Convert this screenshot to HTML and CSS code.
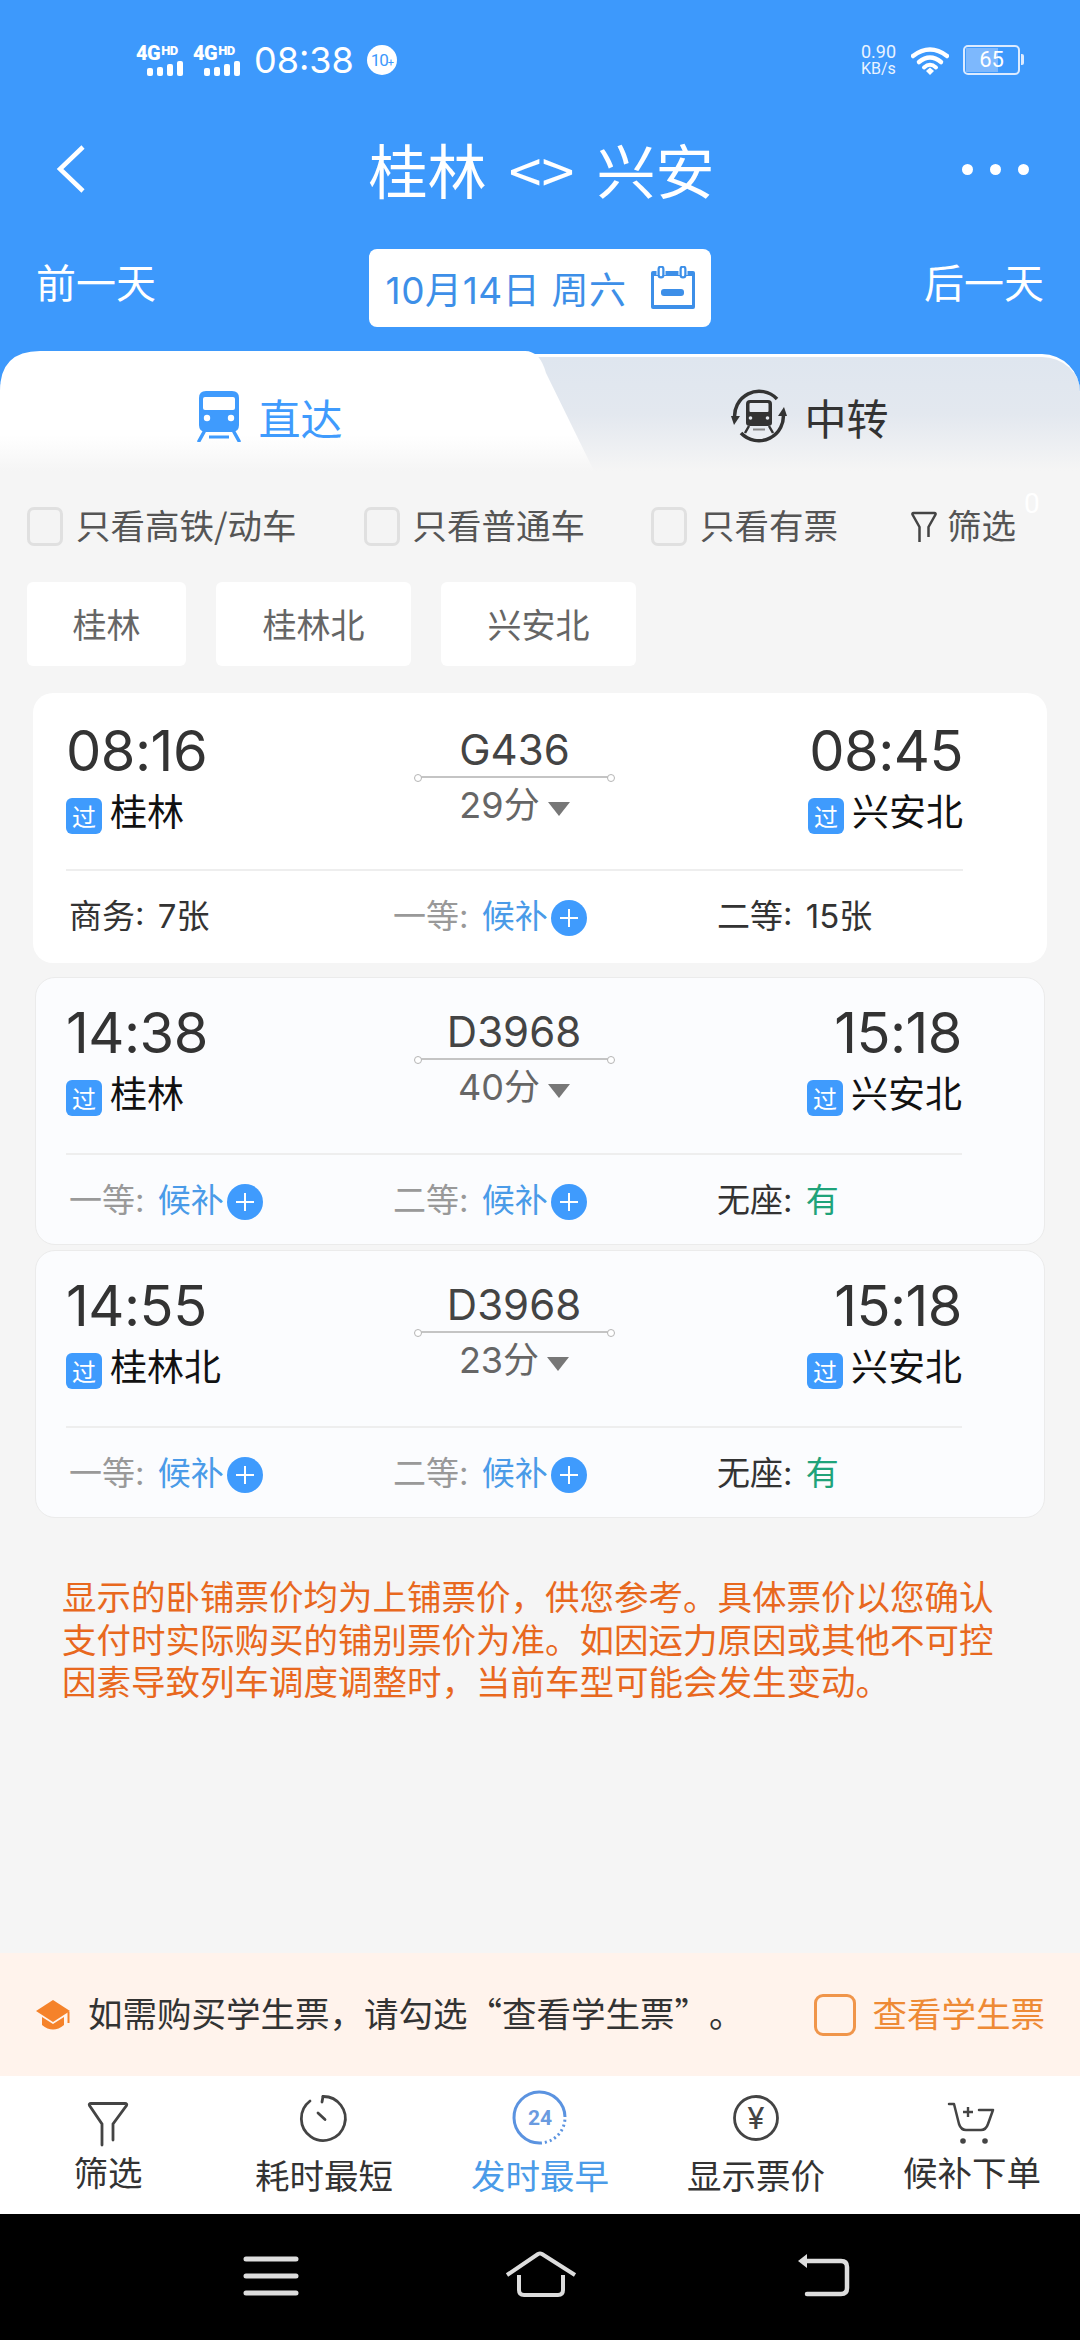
FILE: index.html
```html
<!DOCTYPE html>
<html lang="zh-CN">
  <head>
    <meta charset="UTF-8" />
    <meta name="viewport" content="width=device-width, initial-scale=1.0" />
    <title>桂林 - 兴安</title>
    <link rel="stylesheet" href="styles.css">
  </head>
  <body>
    <header class="header">
      <div class="status-bar">
        <div class="signal"><span class="signal-text">4G<small>HD</small></span><span class="bars"><i></i><i></i><i></i><i></i></span></div>
        <div class="signal"><span class="signal-text">4G<small>HD</small></span><span class="bars"><i></i><i></i><i></i><i></i></span></div>
        <span class="clock">08:38</span>
        <span class="notif">10<small>+</small></span>
        <div class="status-right">
          <div class="speed"><span>0.90</span><span class="speed-unit">KB/s</span></div>
          <svg class="wifi" width="38" height="28" viewBox="0 0 38 28">
            <path d="M2 9 Q19 -4 36 9" fill="none" stroke="#fff" stroke-width="4.5" stroke-linecap="round" />
            <path d="M8 15 Q19 6 30 15" fill="none" stroke="#fff" stroke-width="4.5" stroke-linecap="round" />
            <path d="M13 20.5 Q19 15 25 20.5" fill="none" stroke="#fff" stroke-width="4" stroke-linecap="round" />
            <path d="M15 24 L19 20.5 L23 24 L19 28 Z" fill="#fff" />
          </svg>
          <div class="battery"><span class="battery-fill"></span><span class="battery-num">65</span></div>
        </div>
      </div>

      <div class="title-row">
        <svg class="back-icon" width="34" height="48" viewBox="0 0 34 48">
          <path d="M29 2 L6 24 L29 46" fill="none" stroke="#fff" stroke-width="4.5" />
        </svg>
        <h1 class="title">桂林 &lt;&gt; 兴安</h1>
        <div class="more"><i></i><i></i><i></i></div>
      </div>

      <div class="date-row">
        <span class="day-link">前一天</span>
        <div class="date-pill">
          <span class="date-text">10月14日 周六</span>
          <svg width="46" height="44" viewBox="0 0 46 44">
            <rect x="1" y="5" width="44" height="38" rx="2" fill="#3d8fe8" />
            <rect x="4" y="10" width="38" height="29" fill="#fff" />
            <path d="M11 4 V9 M33 4 V9" stroke="#fff" stroke-width="9" />
            <path d="M11 3 V9 M33 3 V9" stroke="#3d8fe8" stroke-width="7" stroke-linecap="round" />
            <path d="M11 3 V9 M33 3 V9" stroke="#fff" stroke-width="2.500" stroke-linecap="round" />
            <rect x="11" y="23" width="23" height="7" rx="3" fill="#3d8fe8" />
          </svg>
        </div>
        <span class="day-link day-next">后一天</span>
      </div>
    </header>

    <div class="tabs">
      <div class="tab-back"></div>
      <div class="tab-front"></div>
      <div class="tab tab-active">
        <svg width="44" height="52" viewBox="0 0 44 52">
          <path d="M9 1 H35 Q42 1 42 8 V35 Q42 42 35 42 H9 Q2 42 2 35 V8 Q2 1 9 1 Z" fill="#3f9bfd" />
          <rect x="6" y="7" width="32" height="13" rx="2" fill="#fff" />
          <circle cx="10" cy="28" r="3.2" fill="#fff" />
          <circle cx="34" cy="28" r="3.2" fill="#fff" />
          <path d="M7 42 L2 51 M37 42 L42 51" stroke="#3f9bfd" stroke-width="3.5" stroke-linecap="round" />
          <path d="M12 47 H32" stroke="#3f9bfd" stroke-width="3" />
        </svg>
        <span>直达</span>
      </div>
      <div class="tab">
        <svg width="56" height="56" viewBox="0 0 56 56">
          <path d="M4 32 A24.5 24.5 0 0 1 46 11" fill="none" stroke="#333" stroke-width="3.5" />
          <path d="M52 24 A24.5 24.5 0 0 1 10 45" fill="none" stroke="#333" stroke-width="3.5" />
          <path d="M0 28 L9 28 L3 37 Z" fill="#333" />
          <path d="M56 28 L47 28 L53 19 Z" fill="#333" />
          <path d="M19 12 H37 Q41 12 41 16 V35 Q41 38 37 38 H19 Q15 38 15 35 V16 Q15 12 19 12 Z" fill="#333" />
          <rect x="18.500" y="15" width="19" height="9" rx="1" fill="#e6eaf0" />
          <circle cx="19.500" cy="30" r="1.800" fill="#e6eaf0" />
          <circle cx="36.500" cy="30" r="1.800" fill="#e6eaf0" />
          <path d="M18 38 L14 45 M38 38 L42 45" stroke="#333" stroke-width="2.500" />
          <path d="M22 41.500 H34" stroke="#888" stroke-width="2" />
        </svg>
        <span>中转</span>
      </div>
    </div>

    <main class="content">
      <div class="filter-row">
        <label class="check"><span class="box"></span><span class="check-text">只看高铁/动车</span></label>
        <label class="check check-2"><span class="box"></span><span class="check-text">只看普通车</span></label>
        <label class="check check-3"><span class="box"></span><span class="check-text">只看有票</span></label>
        <div class="filter-link">
          <svg width="28" height="32" viewBox="0 0 27 32">
            <path d="M9 31 V16 L2 3.500 Q1.500 2 3 2 H24 Q25.500 2 25 3.500 L18 16 V26" fill="none" stroke="#444" stroke-width="2.500" />
          </svg>
          <span class="check-text">筛选</span>
          <span class="filter-count">0</span>
        </div>
      </div>

      <div class="chips">
        <span class="chip chip-short">桂林</span>
        <span class="chip">桂林北</span>
        <span class="chip">兴安北</span>
      </div>

      <div class="card">
        <div class="card-top">
          <div class="side">
            <div class="time">08:16</div>
            <div class="station"><span class="pass">过</span><span class="station-name">桂林</span></div>
          </div>
          <div class="middle">
            <div class="train-no">G436</div>
            <div class="route"></div>
            <div class="duration">29分<span class="arrow"></span></div>
          </div>
          <div class="side side-right">
            <div class="time">08:45</div>
            <div class="station"><span class="pass">过</span><span class="station-name">兴安北</span></div>
          </div>
        </div>
        <div class="divider"></div>
        <div class="seats">
          <div class="seat">商务: 7张</div>
          <div class="seat seat-none">一等: <span class="wait">候补</span><span class="plus"></span></div>
          <div class="seat">二等: 15张</div>
        </div>
      </div>

      <div class="card card-alt">
        <div class="card-top">
          <div class="side">
            <div class="time">14:38</div>
            <div class="station"><span class="pass">过</span><span class="station-name">桂林</span></div>
          </div>
          <div class="middle">
            <div class="train-no">D3968</div>
            <div class="route"></div>
            <div class="duration">40分<span class="arrow"></span></div>
          </div>
          <div class="side side-right">
            <div class="time">15:18</div>
            <div class="station"><span class="pass">过</span><span class="station-name">兴安北</span></div>
          </div>
        </div>
        <div class="divider"></div>
        <div class="seats">
          <div class="seat seat-none">一等: <span class="wait">候补</span><span class="plus"></span></div>
          <div class="seat seat-none">二等: <span class="wait">候补</span><span class="plus"></span></div>
          <div class="seat">无座: <span class="has">有</span></div>
        </div>
      </div>

      <div class="card card-alt card-next">
        <div class="card-top">
          <div class="side">
            <div class="time">14:55</div>
            <div class="station"><span class="pass">过</span><span class="station-name">桂林北</span></div>
          </div>
          <div class="middle">
            <div class="train-no">D3968</div>
            <div class="route"></div>
            <div class="duration">23分<span class="arrow"></span></div>
          </div>
          <div class="side side-right">
            <div class="time">15:18</div>
            <div class="station"><span class="pass">过</span><span class="station-name">兴安北</span></div>
          </div>
        </div>
        <div class="divider"></div>
        <div class="seats">
          <div class="seat seat-none">一等: <span class="wait">候补</span><span class="plus"></span></div>
          <div class="seat seat-none">二等: <span class="wait">候补</span><span class="plus"></span></div>
          <div class="seat">无座: <span class="has">有</span></div>
        </div>
      </div>

      <p class="notice">显示的卧铺票价均为上铺票价，供您参考。具体票价以您确认支付时实际购买的铺别票价为准。如因运力原因或其他不可控因素导致列车调度调整时，当前车型可能会发生变动。</p>
    </main>

    <div class="student-bar">
      <svg width="36" height="32" viewBox="0 0 36 32">
        <path d="M18 1 L35 12 L18 23 L1 12 Z" fill="#f5822a" />
        <path d="M7 18 L18 25 L29 18 V26 Q18 35 7 26 Z" fill="#f5822a" />
        <path d="M33.500 13 V24" stroke="#f5822a" stroke-width="2" />
      </svg>
      <span class="student-text">如需购买学生票，请勾选“查看学生票”。</span>
      <label class="student-check"><span class="student-box"></span><span class="student-label">查看学生票</span></label>
    </div>

    <nav class="bottom-bar">
      <div class="bar-item bar-raised">
        <svg width="60" height="60" viewBox="0 0 60 60">
          <path d="M24 57 V36 L11.500 17.500 Q10.500 15.500 13 15.500 H47 Q49.500 15.500 48.500 17.500 L35 36 V52" fill="none" stroke="#444" stroke-width="2.800" stroke-linecap="round" />
        </svg>
        <span>筛选</span>
      </div>
      <div class="bar-item">
        <svg width="60" height="60" viewBox="0 0 60 60">
          <path d="M29 8.500 A22 22 0 1 1 16 13" fill="none" stroke="#444" stroke-width="2.800" stroke-linecap="round" />
          <path d="M29 8.500 L28 14 M24 25 L31 31.500" fill="none" stroke="#444" stroke-width="2.800" stroke-linecap="round" />
        </svg>
        <span>耗时最短</span>
      </div>
      <div class="bar-item bar-active">
        <svg width="60" height="60" viewBox="0 0 60 60">
          <path d="M55 29 A25.500 25.500 0 1 0 30 55" fill="none" stroke="#5b93e0" stroke-width="3" />
          <path d="M30 55 A25.500 25.500 0 0 0 55 29" fill="none" stroke="#5b93e0" stroke-width="3" stroke-dasharray="2 3" />
          <text x="30" y="37" text-anchor="middle" class="bar-24">24</text>
        </svg>
        <span>发时最早</span>
      </div>
      <div class="bar-item">
        <svg width="60" height="60" viewBox="0 0 60 60">
          <circle cx="30" cy="30" r="21.500" fill="none" stroke="#444" stroke-width="2.800" />
          <text x="30" y="41" text-anchor="middle" class="bar-yen">¥</text>
        </svg>
        <span>显示票价</span>
      </div>
      <div class="bar-item bar-raised">
        <svg width="60" height="60" viewBox="0 0 60 60">
          <path d="M7 16 H12 L17 36 Q19 42 24 42 H39 Q44 42 46 36 L51 22 H37" fill="none" stroke="#444" stroke-width="2.500" stroke-linecap="round" stroke-linejoin="round" />
          <path d="M26 19 V29 M21 24 H31" stroke="#444" stroke-width="2.400" />
          <circle cx="21" cy="53" r="2.800" fill="#444" />
          <circle cx="43" cy="53" r="2.800" fill="#444" />
        </svg>
        <span>候补下单</span>
      </div>
    </nav>

    <div class="nav-bar">
      <svg width="80" height="60" viewBox="0 0 80 60">
        <path d="M15 10 H65 M15 27 H65 M15 44 H65" stroke="#ddd" stroke-width="5" stroke-linecap="round" />
      </svg>
      <svg width="80" height="60" viewBox="0 0 80 60">
        <path d="M7 25 L38 4 Q40 3 42 4 L75 25" fill="none" stroke="#ddd" stroke-width="4" transform="translate(0 1)" />
        <path d="M19 26 V41 Q19 46 24 46 H58 Q63 46 63 41 V26" fill="none" stroke="#ddd" stroke-width="4" />
      </svg>
      <svg class="nav-back" width="80" height="60" viewBox="0 0 80 60">
        <path d="M22 12 H58 Q64 12 64 18 V39 Q64 45 58 45 H24" fill="none" stroke="#ddd" stroke-width="4.500" stroke-linecap="round" />
        <path d="M15 12 L24 5 V19 Z" fill="#ddd" />
      </svg>
    </div>
  </body>
</html>
```

FILE: styles.css
```css
/* page */
* {
  box-sizing: border-box;
}

body {
  margin: 0;
  width: 1080px;
  height: 2340px;
  display: flex;
  flex-direction: column;
  overflow: hidden;
  background: #f5f5f5;
  font-family: Inter, "Noto Sans CJK SC", sans-serif;
  color: #333;
  text-spacing-trim: space-all;
}

/* blue header */
.header {
  height: 351px;
  background: #3d99fc;
  color: #fff;
  padding-bottom: 24px;
}

.status-bar {
  height: 86px;
  padding: 43px 60px 0 136px;
  display: flex;
  align-items: flex-start;
}

.signal {
  width: 47px;
  margin-right: 10px;
  display: flex;
  flex-direction: column;
  align-items: flex-end;
}

.signal-text {
  font-family: Roboto, sans-serif;
  font-size: 20px;
  line-height: 15px;
  font-weight: 900;
  letter-spacing: -0.5px;
  align-self: flex-start;
  white-space: nowrap;
}

.signal-text small {
  font-size: 13px;
  vertical-align: 5px;
  margin-left: 1px;
}

.bars {
  display: flex;
  align-items: flex-end;
  gap: 4px;
  height: 15px;
}

.bars i {
  width: 6px;
  background: #fff;
  border-radius: 2px;
}

.bars i:nth-child(1) { height: 8px; }
.bars i:nth-child(2) { height: 9px; }
.bars i:nth-child(3) { height: 12px; }
.bars i:nth-child(4) { height: 15px; }

.clock {
  font-size: 36px;
  line-height: 34px;
  margin-left: 4px;
}

.notif {
  width: 30px;
  height: 30px;
  margin: 2px 0 0 13px;
  border-radius: 50%;
  background: #fff;
  color: #3d99fc;
  font-family: Roboto, sans-serif;
  font-size: 17px;
  line-height: 30px;
  text-align: center;
  letter-spacing: -1px;
}

.notif small {
  font-size: 11px;
}

.status-right {
  margin-left: auto;
  display: flex;
  align-items: flex-start;
}

.speed {
  display: flex;
  flex-direction: column;
  width: 50px;
  font-family: Roboto, sans-serif;
  font-size: 18px;
  line-height: 18px;
  color: #eaf3ff;
}

.speed-unit {
  font-size: 16px;
  line-height: 16px;
}

.wifi {
  margin: 4px 14px 0 0;
}

.battery {
  position: relative;
  width: 57px;
  height: 30px;
  border: 2.5px solid #dcebff;
  border-radius: 5px;
  margin-top: 2px;
  font-family: Roboto, sans-serif;
  font-size: 22px;
  line-height: 25px;
  text-align: center;
}

.battery::after {
  content: "";
  position: absolute;
  right: -6px;
  top: 7px;
  width: 3px;
  height: 11px;
  background: #dcebff;
  border-radius: 0 2px 2px 0;
}

.battery-fill {
  position: absolute;
  left: 1px;
  top: 1px;
  bottom: 1px;
  width: 32px;
  background: #7db8fd;
}

.battery-num {
  position: relative;
}

.title-row {
  height: 80px;
  margin-top: 43px;
  padding: 0 51px 0 54px;
  display: grid;
  grid-template-columns: 1fr auto 1fr;
  align-items: center;
}

.title {
  margin: 0;
  font-family: "Noto Sans CJK SC", sans-serif;
  font-size: 59px;
  font-weight: 400;
  line-height: 80px;
  word-spacing: 9px;
}

.more {
  justify-self: end;
  display: flex;
  gap: 17px;
}

.more i {
  width: 11px;
  height: 11px;
  border-radius: 50%;
  background: #fff;
}

.date-row {
  height: 78px;
  margin-top: 40px;
  padding: 0 36px;
  display: flex;
  align-items: center;
  justify-content: space-between;
}

.day-link {
  width: 120px;
  font-size: 40px;
  line-height: 60px;
  margin-top: -8px;
}

.day-next {
  text-align: right;
}

.date-pill {
  width: 342px;
  height: 78px;
  padding: 0 15px 0 17px;
  margin-left: -1px;
  display: flex;
  align-items: center;
  justify-content: space-between;
  background: #fff;
  border-radius: 8px;
  color: #3d8fe8;
  font-size: 37px;
}

.date-text {
  letter-spacing: 0.6px;
}

/* tabs */
.tabs {
  position: relative;
  height: 120px;
  padding-top: 35px;
  display: grid;
  grid-template-columns: 540px 540px;
  background: linear-gradient(to bottom, #3d99fc 0, #3d99fc 40px, #f5f5f5 40px);
}

.tab-back {
  position: absolute;
  left: 0;
  right: 0;
  top: 3px;
  bottom: 0;
  border-top: 3px solid #fff;
  border-radius: 38px 38px 0 0;
  background: linear-gradient(to bottom, #dfe6ef, #e3e8ef 50%, #f5f5f5);
}

.tab-front {
  position: absolute;
  left: 0;
  top: 0;
  width: 600px;
  height: 120px;
  background: linear-gradient(to bottom, #fff 0, #fff 70%, #f5f5f5 100%);
  clip-path: path("M0 120 V40 Q0 0 40 0 H525 Q540 0 546 22 L594 120 Z");
}

.tab {
  position: relative;
  display: flex;
  align-items: center;
  justify-content: center;
  gap: 17px;
  font-family: "Noto Sans CJK SC", sans-serif;
  font-size: 42px;
  height: 60px;
  color: #333;
}

.tab-active {
  color: #3f9bfd;
}

/* filters */
.filter-row {
  height: 111px;
  padding-left: 27px;
  display: flex;
  align-items: center;
  font-size: 34.500px;
  color: #555;
  font-family: "Noto Sans CJK SC", sans-serif;
}

.check {
  display: flex;
  align-items: center;
}

.check-text {
  margin-bottom: 5px;
}

.check-2 {
  margin-left: 67px;
}

.check-3 {
  margin-left: 66px;
}

.box {
  width: 36px;
  height: 39px;
  margin-right: 13px;
  border: 3px solid #e0e0e0;
  border-radius: 7px;
  background: #f4f4f4;
}

.filter-link {
  position: relative;
  margin-left: 72px;
  display: flex;
  align-items: center;
  gap: 9px;
}

.filter-count {
  position: absolute;
  left: 114px;
  top: -11px;
  font-family: Roboto, sans-serif;
  font-size: 28px;
  line-height: 32px;
  color: #fff;
}

.chips {
  padding-left: 27px;
  display: flex;
  gap: 30px;
}

.chip {
  width: 195px;
  height: 84px;
  background: #fff;
  border-radius: 6px;
  font-family: "Noto Sans CJK SC", sans-serif;
  font-size: 34px;
  line-height: 84px;
  text-align: center;
  color: #666;
}

.chip-short {
  width: 159px;
}

/* train cards */
.card {
  width: 1014px;
  height: 270px;
  margin: 27px 0 0 33px;
  padding: 28px 84px 0 33px;
  background: #fff;
  border-radius: 20px;
}

.card-alt {
  width: 1010px;
  height: 268px;
  margin: 14px 0 0 35px;
  padding: 25px 82px 0 30px;
  background: #fbfcfe;
  border: 1px solid #ebebeb;
}

.card-next {
  margin-top: 5px;
}

.card-top {
  display: grid;
  grid-template-columns: 1fr 197px 1fr;
  height: 119px;
}

.card-alt .card-top {
  height: 121px;
}

.time {
  font-size: 56px;
  line-height: 60px;
  letter-spacing: -0.500px;
  color: #333;
}

.station {
  margin-top: 13px;
  height: 44px;
  display: flex;
  align-items: center;
  gap: 8px;
  font-family: "Noto Sans CJK SC", sans-serif;
  font-size: 37px;
  color: #111;
}

.station-name {
  margin-bottom: 12px;
}

.pass {
  width: 36px;
  height: 36px;
  border-radius: 6px;
  background: #3f9bfd;
  color: #fff;
  font-size: 24px;
  line-height: 36px;
  text-align: center;
}

.side-right {
  text-align: right;
}

.side-right .station {
  justify-content: flex-end;
}

.middle {
  text-align: center;
}

.train-no {
  margin-top: 4px;
  font-size: 42px;
  line-height: 50px;
  color: #444;
}

.route {
  position: relative;
  height: 2px;
  margin-top: 1px;
  background: #c4c4c4;
}

.route::before,
.route::after {
  content: "";
  position: absolute;
  top: -2px;
  width: 6px;
  height: 6px;
  border: 1px solid #b5b5b5;
  border-radius: 50%;
  background: #fff;
}

.route::before {
  left: -2px;
}

.route::after {
  right: -2px;
}

.duration {
  margin-top: 2px;
  font-size: 36px;
  line-height: 50px;
  color: #666;
}

.arrow {
  display: inline-block;
  margin-left: 8px;
  vertical-align: 2px;
  border-left: 11px solid transparent;
  border-right: 11px solid transparent;
  border-top: 14px solid #777;
}

.divider {
  height: 2px;
  margin-top: 29px;
  background: #eeeeee;
}

.seats {
  height: 92px;
  padding: 0 0 6px 3px;
  display: grid;
  grid-template-columns: 324px 324px 1fr;
  align-items: center;
  font-size: 33px;
  word-spacing: 4px;
  color: #333;
}

.seat {
  display: flex;
  align-items: center;
  white-space: pre;
}

.seat-none {
  color: #999;
}

.wait {
  color: #4a9be8;
}

.has {
  color: #1fa37a;
}

.plus {
  position: relative;
  width: 36px;
  height: 36px;
  margin: 8px 0 0 3px;
  border-radius: 50%;
  background: #3f9bfd;
}

.plus::before,
.plus::after {
  content: "";
  position: absolute;
  background: #fff;
}

.plus::before {
  left: 9px;
  right: 9px;
  top: 17px;
  height: 2px;
}

.plus::after {
  top: 9px;
  bottom: 9px;
  left: 17px;
  width: 2px;
}

.notice {
  width: 945px;
  margin: 56px 0 0 62px;
  font-family: "Noto Sans CJK SC", sans-serif;
  font-size: 34.500px;
  line-height: 42.500px;
  color: #e8681e;
}

.content {
  flex: 1;
}

/* student banner */
.student-bar {
  height: 123px;
  padding: 0 35px 0 35px;
  display: flex;
  align-items: center;
  background: #fff3ec;
  font-family: "Noto Sans CJK SC", sans-serif;
  font-size: 34.500px;
  color: #333;
}

.student-text {
  margin: 0 0 5px 17px;
}

.student-check {
  margin-left: auto;
  display: flex;
  align-items: center;
  gap: 17px;
  color: #ee8a35;
}

.student-label {
  margin-bottom: 5px;
}

.student-box {
  width: 42px;
  height: 42px;
  border: 3px solid #f0954a;
  border-radius: 9px;
}

/* bottom bar */
.bottom-bar {
  height: 138px;
  padding-top: 12px;
  display: grid;
  grid-template-columns: repeat(5, 216px);
  background: #fff;
  font-family: "Noto Sans CJK SC", sans-serif;
  font-size: 34.500px;
  color: #333;
}

.bar-item {
  display: flex;
  flex-direction: column;
  align-items: center;
}

.bar-item span {
  line-height: 44px;
  margin-top: 4px;
}

.bar-raised span {
  margin-top: 1px;
}

.bar-active {
  color: #4a9be8;
}

.bar-24 {
  font-family: Roboto, sans-serif;
  font-size: 21px;
  font-weight: 700;
  fill: #6a9be0;
}

.bar-yen {
  font-family: Roboto, sans-serif;
  font-size: 32px;
  font-weight: 400;
  fill: #444;
}

/* system nav */
.nav-bar {
  height: 126px;
  padding: 35px 0 0 231px;
  display: flex;
  align-items: flex-start;
  gap: 189px;
  background: #000;
}

.nav-back {
  margin-left: 14px;
}
```
